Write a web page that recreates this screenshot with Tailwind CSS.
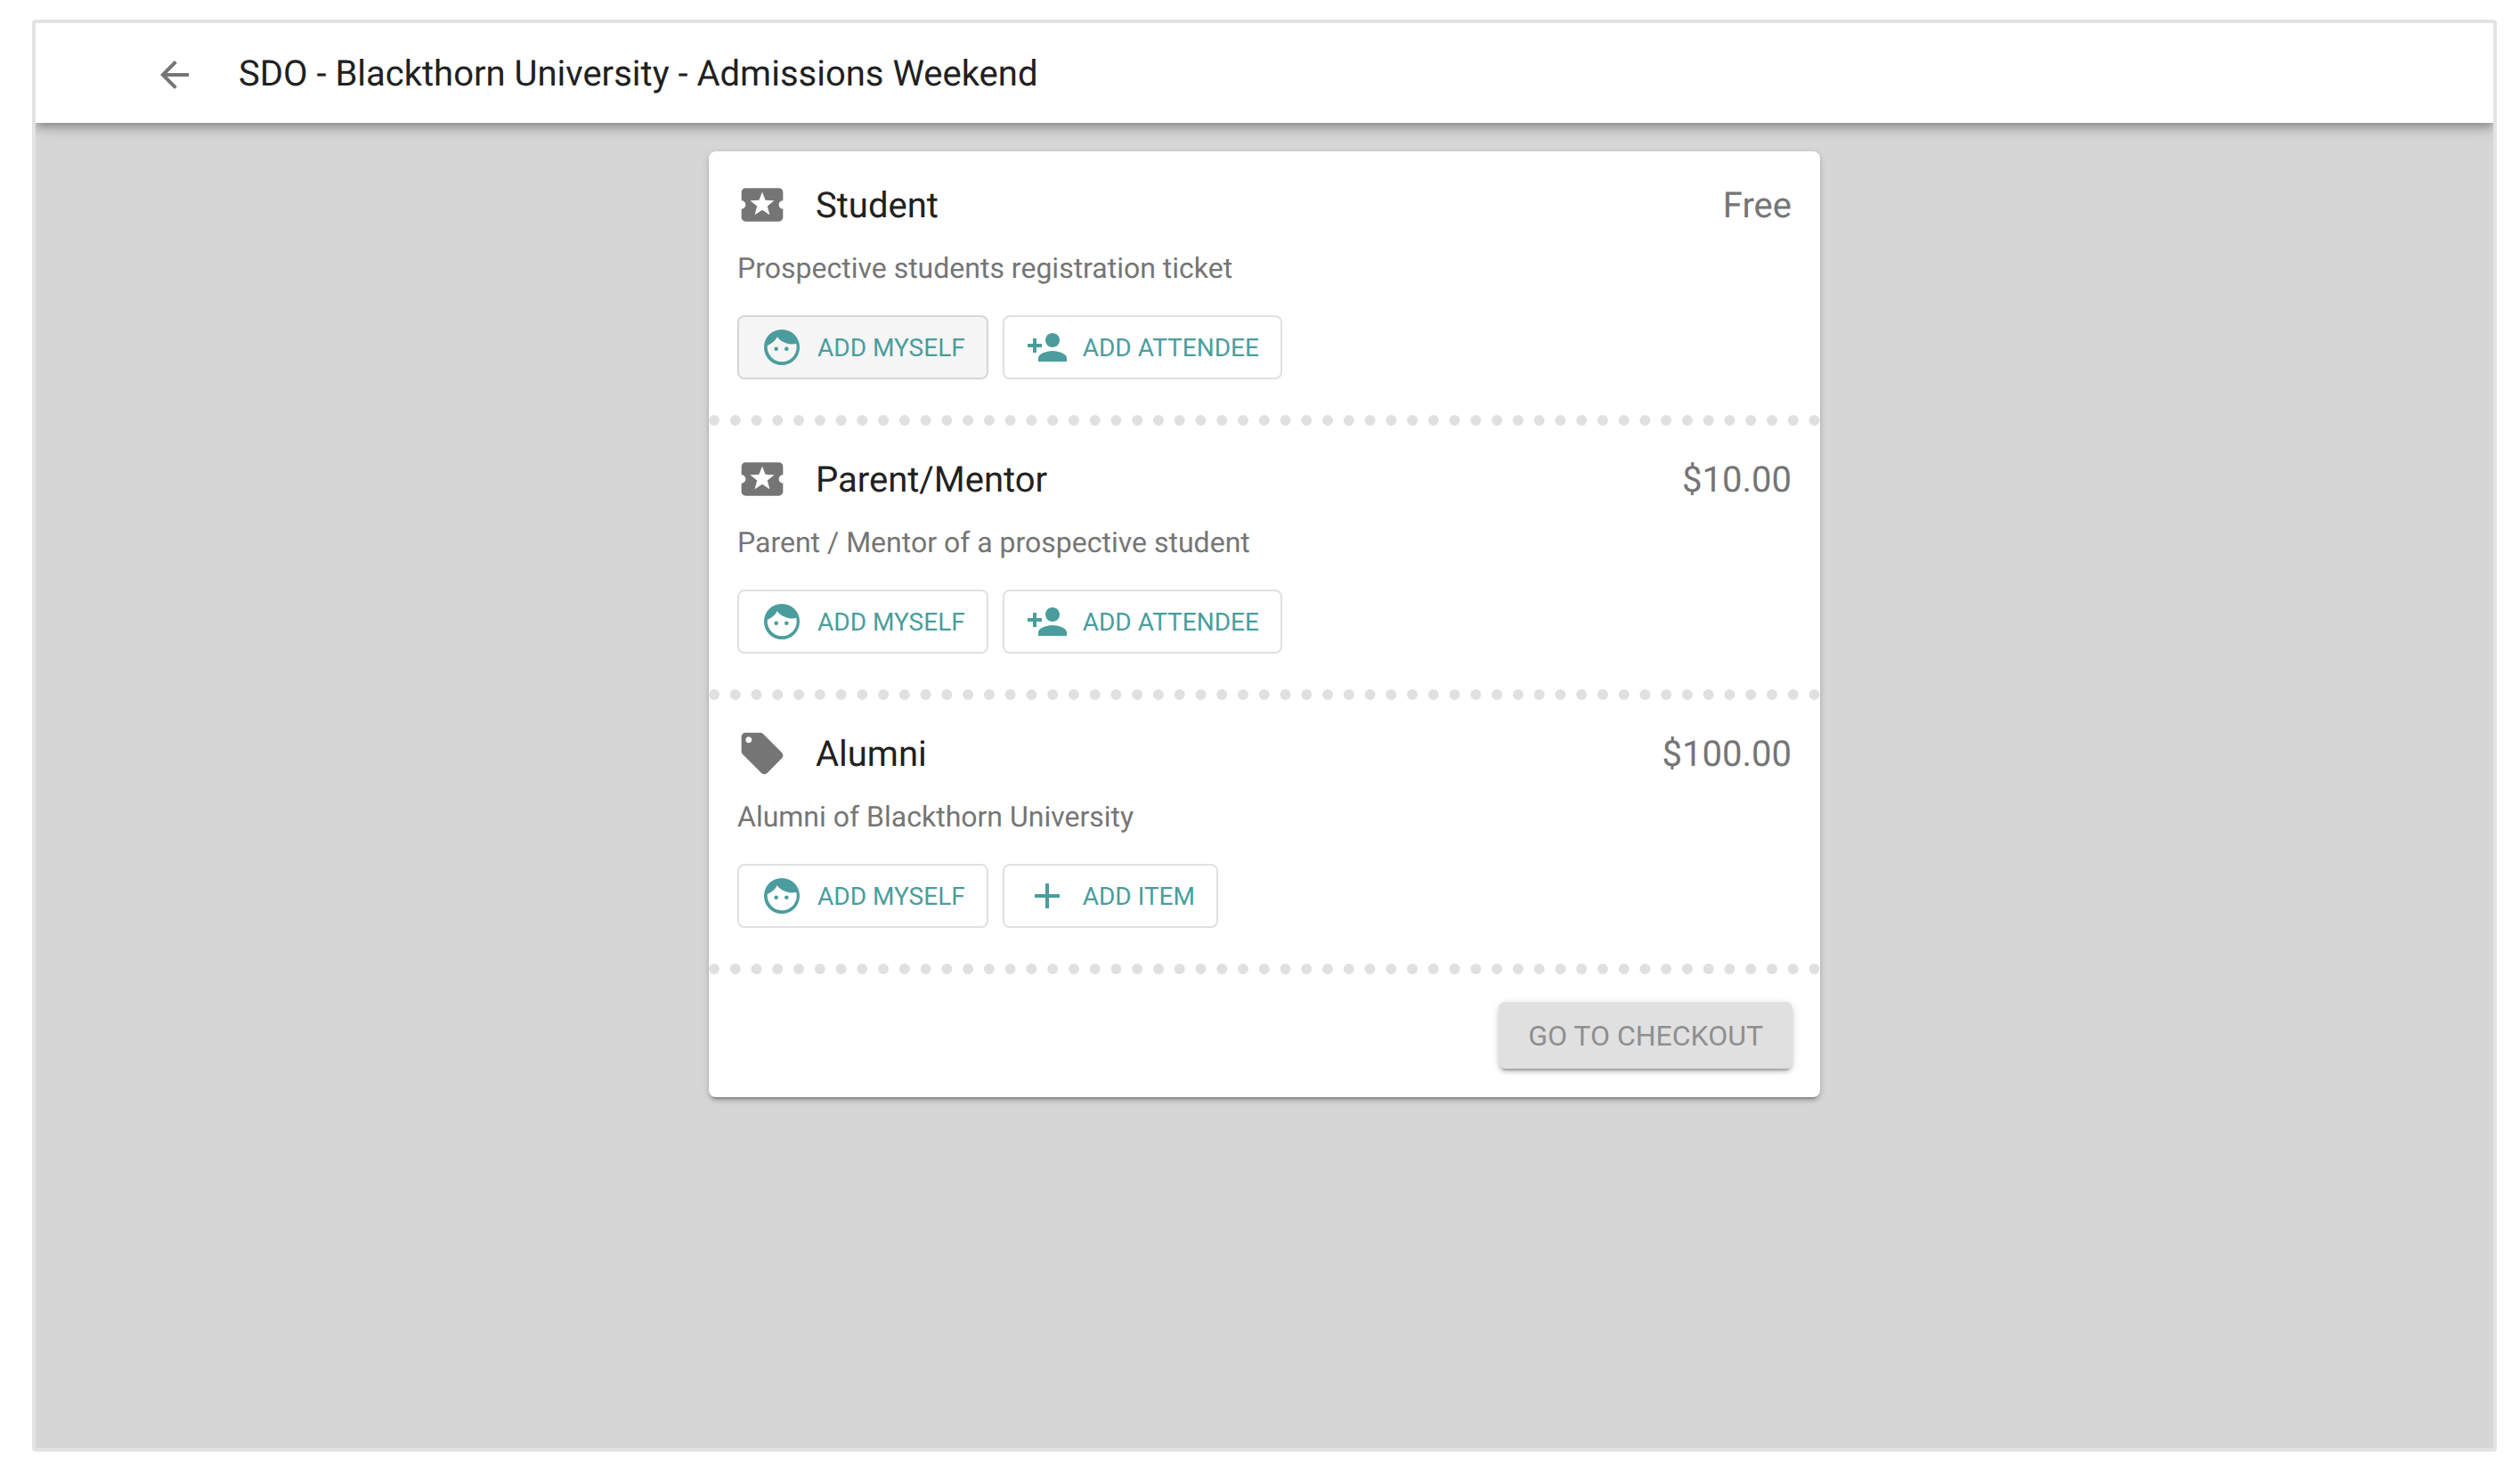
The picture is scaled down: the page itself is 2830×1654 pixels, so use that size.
<!DOCTYPE html>
<html lang="en">
<head>
    <meta charset="UTF-8">
    <meta name="viewport" content="width=device-width, initial-scale=1.0">
    <title>SDO - Blackthorn University - Admissions Weekend</title>
    <script src="https://cdn.jsdelivr.net/npm/@tailwindcss/browser@4"></script>
</head>
<body class="bg-white h-[1654px] pt-[22px] pl-[36px] pr-[26px] font-['Roboto',sans-serif] [text-rendering:geometricPrecision] overflow-hidden">
    <div class="h-[1608px] border-4 border-[#e3e3e3] rounded-[4px] bg-[#d6d6d6] flex flex-col overflow-hidden">
        <!-- Header -->
        <header class="relative z-10 h-[112px] shrink-0 bg-white flex items-center pl-[132px] gap-[48px] shadow-[0_4px_8px_-2px_rgba(0,0,0,0.2),0_8px_10px_0_rgba(0,0,0,0.14),0_2px_20px_0_rgba(0,0,0,0.12)]">
            <svg class="w-12 h-12 fill-[#757575] mt-[4px]" viewBox="0 0 24 24"><path d="M20 11H7.83l5.59-5.59L12 4l-8 8 8 8 1.41-1.41L7.83 13H20v-2z"/></svg>
            <h1 class="mt-[2px] text-[40px] leading-[48px] text-[#212121]">SDO - Blackthorn University - Admissions Weekend</h1>
        </header>

        <!-- Ticket card -->
        <main class="w-[1248px] mx-auto mt-[32px] bg-white rounded-[8px] overflow-hidden shrink-0 shadow-[0_6px_2px_-4px_rgba(0,0,0,0.2),0_4px_4px_0_rgba(0,0,0,0.14),0_2px_10px_0_rgba(0,0,0,0.12)]">
            <!-- Student -->
            <section class="h-[308px] px-[32px] pt-[32px] border-b-[12px] border-dotted border-[#e0e0e0]">
                <div class="flex items-center h-14">
                    <svg class="w-14 h-14 fill-[#757575]" viewBox="0 0 24 24"><path d="M20 12c0-1.1.9-2 2-2V6c0-1.1-.9-2-2-2H4c-1.1 0-1.99.9-1.99 2v4c1.1 0 1.99.9 1.99 2s-.89 2-2 2v4c0 1.1.9 2 2 2h16c1.1 0 2-.9 2-2v-4c-1.1 0-2-.9-2-2zm-4.42 4.8L12 14.5l-3.58 2.3 1.08-4.12-3.29-2.69 4.24-.25L12 5.8l1.54 3.95 4.24.25-3.29 2.69 1.09 4.11z"/></svg>
                    <span class="ml-[32px] mt-[2px] text-[40px] text-[#212121]">Student</span>
                    <span class="ml-auto mt-[2px] text-[40px] text-[#757575]">Free</span>
                </div>
                <p class="mt-[19px] text-[32px] leading-[48px] text-[#757575]">Prospective students registration ticket</p>
                <div class="mt-[29px] flex gap-[16px]">
                    <button class="h-[72px] flex items-center gap-4 px-6 border-2 border-[#d6d6d6] rounded-[8px] bg-[#f5f5f5] text-[28px] text-[#4a9d9c]">
                        <svg class="w-12 h-12 fill-[#4a9d9c]" viewBox="0 0 48 48"><path fill-rule="evenodd" d="M24 4a20 20 0 1 0 0 40a20 20 0 1 0 0-40zM7.8 22C12.500 20 16.500 17 18.800 12.300C22 17 29 20.500 35 20.500C37 20.500 38.800 20.200 40.200 19.800A16.500 16.500 0 1 1 7.800 22zM17.700 23.500a2.300 2.300 0 1 0 0 4.600a2.300 2.300 0 1 0 0-4.600zM29.300 23.500a2.300 2.300 0 1 0 0 4.600a2.300 2.300 0 1 0 0-4.600z"/></svg>
                        <span class="mt-[2px]">ADD MYSELF</span>
                    </button>
                    <button class="h-[72px] flex items-center gap-4 px-6 border-2 border-[#e0e0e0] rounded-[8px] bg-white text-[28px] text-[#4a9d9c]">
                        <svg class="w-12 h-12 fill-[#4a9d9c]" viewBox="0 0 24 24"><path d="M15 12c2.210 0 4-1.790 4-4s-1.790-4-4-4-4 1.790-4 4 1.790 4 4 4zm-9-2V7H4v3H1v2h3v3h2v-3h3v-2H6zm9 4c-2.670 0-8 1.340-8 4v2h16v-2c0-2.660-5.330-4-8-4z"/></svg>
                        <span class="mt-[2px]">ADD ATTENDEE</span>
                    </button>
                </div>
            </section>

            <!-- Parent/Mentor -->
            <section class="h-[308px] px-[32px] pt-[32px] border-b-[12px] border-dotted border-[#e0e0e0]">
                <div class="flex items-center h-14">
                    <svg class="w-14 h-14 fill-[#757575]" viewBox="0 0 24 24"><path d="M20 12c0-1.1.9-2 2-2V6c0-1.1-.9-2-2-2H4c-1.1 0-1.99.9-1.99 2v4c1.1 0 1.99.9 1.99 2s-.89 2-2 2v4c0 1.1.9 2 2 2h16c1.1 0 2-.9 2-2v-4c-1.1 0-2-.9-2-2zm-4.42 4.8L12 14.5l-3.58 2.3 1.08-4.12-3.29-2.69 4.24-.25L12 5.8l1.54 3.95 4.24.25-3.29 2.69 1.09 4.11z"/></svg>
                    <span class="ml-[32px] mt-[2px] text-[40px] text-[#212121]">Parent/Mentor</span>
                    <span class="ml-auto mt-[2px] text-[40px] text-[#757575]">$10.00</span>
                </div>
                <p class="mt-[19px] text-[32px] leading-[48px] text-[#757575]">Parent / Mentor of a prospective student</p>
                <div class="mt-[29px] flex gap-[16px]">
                    <button class="h-[72px] flex items-center gap-4 px-6 border-2 border-[#e0e0e0] rounded-[8px] bg-white text-[28px] text-[#4a9d9c]">
                        <svg class="w-12 h-12 fill-[#4a9d9c]" viewBox="0 0 48 48"><path fill-rule="evenodd" d="M24 4a20 20 0 1 0 0 40a20 20 0 1 0 0-40zM7.8 22C12.500 20 16.500 17 18.800 12.300C22 17 29 20.500 35 20.500C37 20.500 38.800 20.200 40.200 19.800A16.500 16.500 0 1 1 7.800 22zM17.700 23.500a2.300 2.300 0 1 0 0 4.600a2.300 2.300 0 1 0 0-4.600zM29.300 23.500a2.300 2.300 0 1 0 0 4.600a2.300 2.300 0 1 0 0-4.600z"/></svg>
                        <span class="mt-[2px]">ADD MYSELF</span>
                    </button>
                    <button class="h-[72px] flex items-center gap-4 px-6 border-2 border-[#e0e0e0] rounded-[8px] bg-white text-[28px] text-[#4a9d9c]">
                        <svg class="w-12 h-12 fill-[#4a9d9c]" viewBox="0 0 24 24"><path d="M15 12c2.210 0 4-1.790 4-4s-1.790-4-4-4-4 1.790-4 4 1.790 4 4 4zm-9-2V7H4v3H1v2h3v3h2v-3h3v-2H6zm9 4c-2.670 0-8 1.340-8 4v2h16v-2c0-2.660-5.330-4-8-4z"/></svg>
                        <span class="mt-[2px]">ADD ATTENDEE</span>
                    </button>
                </div>
            </section>

            <!-- Alumni -->
            <section class="h-[308px] px-[32px] pt-[32px] border-b-[12px] border-dotted border-[#e0e0e0]">
                <div class="flex items-center h-14">
                    <svg class="w-14 h-14 fill-[#757575]" viewBox="0 0 24 24"><path d="M21.41 11.58l-9-9C12.05 2.22 11.55 2 11 2H4c-1.1 0-2 .9-2 2v7c0 .55.22 1.05.59 1.42l9 9c.36.36.86.58 1.41.58.55 0 1.05-.22 1.41-.59l7-7c.37-.36.59-.86.59-1.41 0-.55-.23-1.06-.59-1.42zM5.500 7C4.670 7 4 6.330 4 5.500S4.670 4 5.500 4 7 4.670 7 5.500 6.330 7 5.500 7z"/></svg>
                    <span class="ml-[32px] mt-[2px] text-[40px] text-[#212121]">Alumni</span>
                    <span class="ml-auto mt-[2px] text-[40px] text-[#757575]">$100.00</span>
                </div>
                <p class="mt-[19px] text-[32px] leading-[48px] text-[#757575]">Alumni of Blackthorn University</p>
                <div class="mt-[29px] flex gap-[16px]">
                    <button class="h-[72px] flex items-center gap-4 px-6 border-2 border-[#e0e0e0] rounded-[8px] bg-white text-[28px] text-[#4a9d9c]">
                        <svg class="w-12 h-12 fill-[#4a9d9c]" viewBox="0 0 48 48"><path fill-rule="evenodd" d="M24 4a20 20 0 1 0 0 40a20 20 0 1 0 0-40zM7.8 22C12.500 20 16.500 17 18.800 12.300C22 17 29 20.500 35 20.500C37 20.500 38.800 20.200 40.200 19.800A16.500 16.500 0 1 1 7.800 22zM17.700 23.500a2.300 2.300 0 1 0 0 4.600a2.300 2.300 0 1 0 0-4.600zM29.300 23.500a2.300 2.300 0 1 0 0 4.600a2.300 2.300 0 1 0 0-4.600z"/></svg>
                        <span class="mt-[2px]">ADD MYSELF</span>
                    </button>
                    <button class="h-[72px] flex items-center gap-4 px-6 border-2 border-[#e0e0e0] rounded-[8px] bg-white text-[28px] text-[#4a9d9c]">
                        <svg class="w-12 h-12 fill-[#4a9d9c]" viewBox="0 0 24 24"><path d="M19 13h-6v6h-2v-6H5v-2h6V5h2v6h6v2z"/></svg>
                        <span class="mt-[2px]">ADD ITEM</span>
                    </button>
                </div>
            </section>

            <!-- Checkout -->
            <div class="h-[138px] pt-[31px] pr-[31px] flex justify-end items-start">
                <button class="h-[75px] px-[33px] rounded-[8px] bg-[#e0e0e0] text-[32px] text-[#8f8f8f] shadow-[0_6px_2px_-4px_rgba(0,0,0,0.2),0_4px_4px_0_rgba(0,0,0,0.14),0_2px_10px_0_rgba(0,0,0,0.12)]">GO TO CHECKOUT</button>
            </div>
        </main>
    </div>
</body>
</html>
